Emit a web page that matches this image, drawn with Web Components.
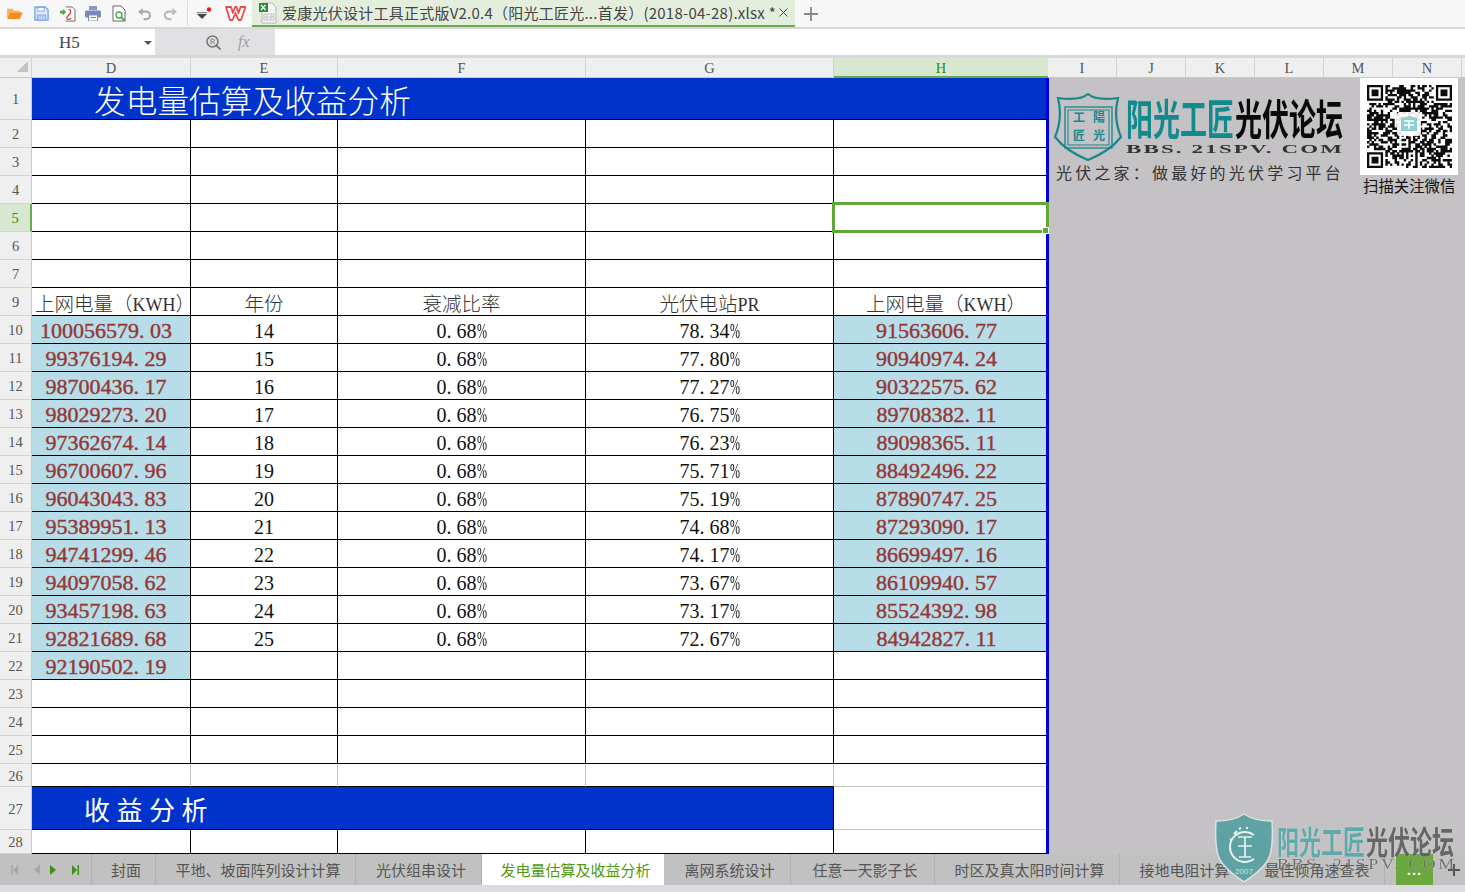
<!DOCTYPE html>
<html lang="zh">
<head>
<meta charset="utf-8">
<title>发电量估算及收益分析</title>
<style>
  html,body{margin:0;padding:0;width:1465px;height:892px;overflow:hidden;background:#c4c2c5}
  body{position:relative;display:flex;flex-direction:column;font-family:"Noto Sans CJK SC","Liberation Sans",sans-serif}
  .work{display:flex;height:776px;flex:none;overflow:hidden}
</style>
</head>
<body>
<wps-toolbar></wps-toolbar>
<formula-bar cell="H5"></formula-bar>
<column-header></column-header>
<div class="work">
  <sheet-grid></sheet-grid>
  <brand-panel></brand-panel>
</div>
<sheet-tabs>
  <sheet-tab w="64">封面</sheet-tab>
  <sheet-tab w="200">平地、坡面阵列设计计算</sheet-tab>
  <sheet-tab w="126">光伏组串设计</sheet-tab>
  <sheet-tab w="182" active>发电量估算及收益分析</sheet-tab>
  <sheet-tab w="127">离网系统设计</sheet-tab>
  <sheet-tab w="144">任意一天影子长</sheet-tab>
  <sheet-tab w="185">时区及真太阳时间计算</sheet-tab>
  <sheet-tab w="125">接地电阻计算</sheet-tab>
  <sheet-tab w="140">最佳倾角速查表</sheet-tab>
</sheet-tabs>
<status-strip></status-strip>
<site-watermark></site-watermark>

<script>
const CJK='"Noto Sans CJK SC","Liberation Sans",sans-serif';

class Base extends HTMLElement{
  constructor(){super();this.attachShadow({mode:'open'}).innerHTML=this.render();}
  render(){return ''}
}

customElements.define('wps-toolbar',class extends Base{render(){return `
<style>
:host{display:block;height:29px;flex:none;box-sizing:border-box;border-bottom:2px solid #d8d8dc;background:#f7f7f7}
.row{display:grid;height:27px;grid-template-columns:6px 17px 11px 15px 10px 17px 9px 16px 11px 15px 11px 13px 12px 14px 10px 1px 9px 16px 7px 32px 543px 9px 14px;align-items:center}
.row svg{display:block;grid-row:1}
.sep{width:1px;height:25px;background:#dcdcdc;grid-column:16;grid-row:1}
.w{grid-column:20;grid-row:1;height:27px;background:#fafafa;display:flex;align-items:center;justify-content:flex-start;margin-left:-1px;padding-left:6px}
.tab{grid-column:21;grid-row:1;height:27px;box-sizing:border-box;border-bottom:2px solid #6fa84f;background:#e4eedd;display:flex;align-items:center;font:15px ${CJK};color:#444;white-space:nowrap;overflow:hidden}
.tab svg{margin:0 5px 0 7px;flex:none}
.tab span{flex:1;letter-spacing:.24px}
.tab i{font-style:normal;flex:none;margin-right:7px}
</style>
<div class="row">
 <svg style="grid-column:2" width="17" height="13" viewBox="0 0 18 14"><path d="M1 12V2h6l1.500 2H15v2H5z" fill="#f7b254"/><path d="M1 13l3.500-7H18l-3.500 7z" fill="#f58a1f"/></svg>
 <svg style="grid-column:4" width="15" height="15" viewBox="0 0 16 16"><path d="M1 1h11l3 3v11H1z" fill="#e3ecfb" stroke="#7ba6ef" stroke-width="1.500"/><rect x="4" y="1.500" width="7" height="4" fill="#fff" stroke="#7ba6ef"/><rect x="3.500" y="9.500" width="9" height="5.500" fill="#b7cff6" stroke="#7ba6ef"/></svg>
 <svg style="grid-column:6" width="17" height="16" viewBox="0 0 18 17"><path d="M7 1h7l3 3v12H7" fill="#fff" stroke="#666"/><path d="M1 5h3V3l3.500 3.500L4 10V8H1z" fill="#4aa84a"/><path d="M10 4c3-1 3 3 1 5s-4 4-2 5 3-1 4-1" fill="none" stroke="#d33" stroke-width="1.300"/></svg>
 <svg style="grid-column:8" width="16" height="15" viewBox="0 0 16 15"><rect x="4" y="0" width="8" height="4" fill="#8b98bf"/><rect x="0" y="4.500" width="16" height="7" rx="1.500" fill="#7b8ab5"/><rect x="3.500" y="9" width="9" height="6" fill="#fff" stroke="#7b8ab5"/><rect x="5" y="11" width="6" height="1" fill="#7b8ab5"/></svg>
 <svg style="grid-column:10" width="15" height="17" viewBox="0 0 15 17"><path d="M1 1h8l4 4v11H1z" fill="#fff" stroke="#666"/><circle cx="7" cy="10" r="3" fill="none" stroke="#4faa4f" stroke-width="1.400"/><path d="M9 12l4 4" stroke="#4faa4f" stroke-width="2"/></svg>
 <svg style="grid-column:12" width="13" height="14" viewBox="0 0 14 15"><path d="M4 5h5a4 4 0 0 1 0 8H6" fill="none" stroke="#a9a9a9" stroke-width="2.400"/><path d="M0 5l5-4v8z" fill="#a9a9a9"/></svg>
 <svg style="grid-column:14" width="14" height="14" viewBox="0 0 15 15"><path d="M10 5H6a4 4 0 0 0 0 8h3" fill="none" stroke="#b9b9b9" stroke-width="2.400"/><path d="M15 5L10 1v8z" fill="#b9b9b9"/></svg>
 <span class="sep"></span>
 <svg style="grid-column:18" width="16" height="14" viewBox="0 0 16 14"><circle cx="12" cy="2.500" r="2.200" fill="#f01818"/><rect x="0" y="5" width="10" height="1.200" fill="#888"/><path d="M0 7h10l-5 5z" fill="#444"/></svg>
 <div class="w"><svg width="21" height="15" viewBox="0 0 21 15"><path d="M1 1h5l2 6 2-6h1.500l2 6 2-6h5L16 14h-2.500L10.500 7 7.500 14H5z" fill="#fff" stroke="#ef4b4b" stroke-width="1.800" stroke-linejoin="round"/></svg></div>
 <div class="tab"><svg width="18" height="22" viewBox="0 0 18 22"><path d="M3 1h10l4 4v16H3z" fill="#f4f4f4" stroke="#b8b8b8"/><path d="M5 12h10v6H5zM5 15h10M8 12v6M12 12v6" fill="none" stroke="#c2c2c2"/><rect x="0" y="1" width="9" height="9" fill="#2e8b3a"/><path d="M2 3l4.500 5M6.500 3L2 8" stroke="#fff" stroke-width="1.200"/></svg><span>爱康光伏设计工具正式版V2.0.4（阳光工匠光...首发）(2018-04-28).xlsx *</span><i><svg style="margin:0" width="9" height="9" viewBox="0 0 9 9"><path d="M.5.5l8 8M8.500.5l-8 8" stroke="#444"/></svg></i></div>
 <svg style="grid-column:23" width="14" height="14" viewBox="0 0 14 14"><path d="M7 0v14M0 7h14" stroke="#888" stroke-width="1.800"/></svg>
</div>`}});

customElements.define('formula-bar',class extends Base{render(){return `
<style>
:host{display:flex;height:29px;flex:none;box-sizing:border-box;border-bottom:3px solid #d8d8dc;background:#e1e1e3;align-items:stretch}
.name{width:155px;background:#fff;display:flex;align-items:center;box-sizing:border-box;padding:2px 0 0 59px;font:17px "Liberation Serif",serif;color:#444}
.name b{margin-left:auto;margin-right:3px;width:0;height:0;border:4px solid transparent;border-top-color:#555;border-bottom:0}
.tools{width:120px;display:flex;align-items:center;padding-left:51px;box-sizing:border-box;gap:17px}
.fx{font:italic 16px "Liberation Serif",serif;color:#a0a0a0}
.input{flex:1;background:#fff}
</style>
<div class="name">H5<b></b></div>
<div class="tools">
 <svg width="15" height="15" viewBox="0 0 15 15"><circle cx="6.500" cy="6.500" r="5.500" fill="none" stroke="#777" stroke-width="1.500"/><path d="M10.500 10.500L14.500 14.500" stroke="#777" stroke-width="1.800"/><path d="M5 9.500V4h2a1.500 1.500 0 0 1 0 3H5m2 0l2 2.500" fill="none" stroke="#888"/></svg>
 <span class="fx">fx</span>
</div>
<div class="input"></div>`}});

customElements.define('column-header',class extends Base{render(){
 const cols=[['',32],['D',159],['E',147],['F',248],['G',248],['H',214],['I',69],['J',69],['K',69],['L',69],['M',69],['N',69],['',4]];
 return `
<style>
:host{display:flex;height:20px;flex:none;background:#efefef}
div{box-sizing:border-box;height:20px;border-right:1px solid #d2d2d2;border-bottom:1px solid #c8c8c8;font:14.500px/21px "Liberation Serif",serif;color:#555;text-align:center;flex:none}
.h{background:#d8e7d0;color:#2f8a06;border-bottom:2px solid #6aa84f;border-right:0}
svg{display:block;margin:3px 0 0 17px}
</style>
${cols.map(([c,w])=>`<div class="${c=='H'?'h':''}" style="width:${w}px">${c}${!c&&w==32?'<svg width="11" height="11" viewBox="0 0 11 11"><path d="M11 0v11H0z" fill="#c4c4c4"/></svg>':''}</div>`).join('')}`}});

function num(s){return s.replace('.', '<span class="dot">.</span>').replace('%','<span class="pct">%</span>')}

customElements.define('sheet-grid',class extends Base{render(){
 const d=[
 ['100056579.03',14,'78.34%','91563606.77'],['99376194.29',15,'77.80%','90940974.24'],['98700436.17',16,'77.27%','90322575.62'],
 ['98029273.20',17,'76.75%','89708382.11'],['97362674.14',18,'76.23%','89098365.11'],['96700607.96',19,'75.71%','88492496.22'],
 ['96043043.83',20,'75.19%','87890747.25'],['95389951.13',21,'74.68%','87293090.17'],['94741299.46',22,'74.17%','86699497.16'],
 ['94097058.62',23,'73.67%','86109940.57'],['93457198.63',24,'73.17%','85524392.98'],['92821689.68',25,'72.67%','84942827.11']];
 const empty='<i class="c"></i>'.repeat(5);
 const lab=(n,x='')=>`<b class="r ${x}">${n}</b>`;
 const kwh='<span>上网电量（<span class="m">KWH</span>）</span>';
 let h='';
 h+=lab(1)+`<i class="c title" style="grid-column:span 5">发电量估算及收益分析</i>`;
 [2,3,4,5,6,7].forEach(n=>{h+=lab(n,n==5?'sel':'')+empty;});
 h+=lab(9)+`<i class="c hd hd1">${kwh}</i><i class="c hd">年份</i><i class="c hd">衰减比率</i><i class="c hd"><span>光伏电站<span class="m">PR</span></span></i><i class="c hd hd2">${kwh}</i>`;
 d.forEach((r,i)=>{h+=lab(10+i)+`<i class="c v dl">${num(r[0])}</i><i class="c n">${r[1]}</i><i class="c n">${num('0.68%')}</i><i class="c n">${num(r[2])}</i><i class="c v hl">${num(r[3])}</i>`;});
 h+=lab(22)+`<i class="c v dl">${num('92190502.19')}</i>`+'<i class="c"></i>'.repeat(4);
 [23,24,25].forEach(n=>h+=lab(n)+empty);
 h+=lab(26)+'<i class="c gv"></i>'.repeat(4)+'<i class="c gb gv"></i>';
 h+=lab(27)+`<i class="c title t2" style="grid-column:span 4">收益分析</i><i class="c gb"></i>`;
 h+=lab(28)+'<i class="c"></i>'.repeat(5);
 return `
<style>
:host{display:block;width:1049px;flex:none;background:#fff;position:relative;overflow:hidden}
.g{display:grid;grid-template-columns:32px 159px 147px 248px 248px 215px;
 grid-template-rows:42px repeat(6,28px) 28px repeat(13,28px) repeat(3,28px) 23px 43px 24px;
 position:relative}
.r{font:400 14.500px/1 "Liberation Serif",serif;color:#555;background:#efefef;border-bottom:1px solid #d2d2d2;border-right:1px solid #c8c8c8;box-sizing:border-box;display:flex;align-items:center;justify-content:center;padding-top:2px}
.r.sel{background:#d8e7d0;color:#2f8a06;border-right:2px solid #6aa84f}
.c{font-style:normal;box-sizing:border-box;border-right:1px solid #000;border-bottom:1px solid #000;background:#fff;display:flex;align-items:center;justify-content:center;white-space:pre;color:#111;min-width:0}
.title{background:#0033cc;color:#fff;justify-content:flex-start;padding-left:62px;font:300 31.700px/40px ${CJK};border-right:0}
.t2{padding:2px 0 0 52px;font:400 26px/36px ${CJK};letter-spacing:6.500px;border-right:1px solid #000}
.hd{font:300 19.500px/1 ${CJK};color:#333;padding-top:3px}
.m{font:18px/1 "Liberation Serif",serif;letter-spacing:0}
.hd1{padding-left:8px}
.hd2{padding-left:10px}
.n{font:20px/1 "Liberation Serif",serif;padding-top:2px}
.v{background:#b7dde8;color:#953735;font:22px/1 "Liberation Serif",serif;-webkit-text-stroke:.4px #953735;padding-top:2px}
.dl{padding-right:10px}
.hl{padding-right:9px}
.gb{border-bottom-color:#c4c4c4}
.gv{border-right-color:#c4c4c4}
.dot{letter-spacing:.25em}
.pct{display:inline-block;width:10px;transform:scaleX(.6);transform-origin:0 50%}
.edge{position:absolute;grid-column:6/7;grid-row:1/-1;right:0;top:0;bottom:0;width:3px;background:#0000dc;z-index:2}
.box{position:absolute;grid-column:6/7;grid-row:5/6;box-sizing:border-box;left:-2px;right:0;top:-2px;bottom:-1px;border:3px solid #62a838;z-index:3;pointer-events:none}
.box:after{content:"";position:absolute;right:-3px;bottom:-4px;width:5px;height:5px;background:#62a838;border:1px solid #fff}
</style>
<div class="g">${h}<span class="edge"></span><span class="box"></span></div>`}});

customElements.define('brand-panel',class extends Base{render(){
 let seed=20180428;const rnd=()=>(seed=(seed*1664525+1013904223)>>>0)/4294967296;
 const N=37;let cells='';
 const inF=(x,y)=>(x<8&&y<8)||(x>=N-8&&y<8)||(x<8&&y>=N-8);
 for(let y=0;y<N;y++)for(let x=0;x<N;x++){ if(inF(x,y))continue; if(x>14&&x<22&&y>14&&y<22)continue; if(rnd()<.56)cells+=`M${x} ${y}h1.050v1.050h-1.050z`; }
 const f=(x,y)=>`<path d="M${x} ${y}h7v7h-7zM${x+1} ${y+1}v5h5v-5z" fill-rule="evenodd"/><rect x="${x+2}" y="${y+2}" width="3" height="3"/>`;
 return `
<style>
:host{display:flex;width:416px;flex:none;background:#c4c2c5;align-items:flex-start;font-family:${CJK};overflow:hidden}
.logo{width:306px;margin-left:5px;padding-top:15px;flex:none;box-sizing:border-box}
.top{display:flex;align-items:flex-start;height:68px}
.names{margin-left:4px;width:222px;height:62px;flex:none;display:flex;flex-direction:column}
.cn{height:43px;margin-top:3px;white-space:nowrap;font-weight:700;font-size:27px;line-height:43px;transform:scaleY(1.55);transform-origin:0 50%;letter-spacing:0}
.cn span{color:#118a8e}.cn em{font-style:normal;color:#0a0a0a;margin-left:1px}
.url{font:700 13px/13px "Liberation Serif",serif;color:#333;white-space:nowrap;transform:scaleX(1.770);transform-origin:0 0;letter-spacing:1.200px;margin-top:3px}
.tag{font-size:16px;line-height:20px;letter-spacing:3.200px;color:#333;margin:1px 0 0 2px;white-space:nowrap}
.qr{width:98px;flex:none}
.pic{width:98px;height:97px;background:#fff;display:flex;align-items:center;justify-content:center;position:relative}
.pic svg.q{filter:blur(.35px)}
.mid{position:absolute;left:37px;top:34px}
.cap{font-size:15.400px;line-height:20px;color:#111;margin:0 0 0 3px;white-space:nowrap}
</style>
<div class="logo">
 <div class="top">
  <svg width="68" height="68" viewBox="0 0 68 68" style="flex:none">
   <path d="M34 1Q26 8 4 5Q9 25 1 44Q12 58 34 67Q56 58 67 44Q59 25 64 5Q42 8 34 1Z" fill="none" stroke="#16888d" stroke-width="2.200"/>
   <rect x="11" y="14" width="47" height="41" fill="none" stroke="#16888d" stroke-width="1.300"/>
   <rect x="14" y="17" width="41" height="35" fill="none" stroke="#16888d" stroke-width="1"/>
   <g fill="#16888d" font-family="Noto Sans CJK SC,sans-serif" font-size="12" font-weight="700" text-anchor="middle">
    <text x="25" y="29">工</text><text x="45" y="29">陽</text><text x="25" y="47">匠</text><text x="45" y="47">光</text>
   </g>
  </svg>
  <div class="names">
   <div class="cn"><span>阳光工匠</span><em>光伏论坛</em></div>
   <div class="url">BBS. 21SPV. COM</div>
  </div>
 </div>
 <div class="tag">光伏之家：做最好的光伏学习平台</div>
</div>
<div class="qr">
 <div class="pic">
  <svg class="q" width="85" height="83" viewBox="0 0 37 37" preserveAspectRatio="none" fill="#0c0c0c"><path d="${cells}"/>${f(0,0)}${f(30,0)}${f(0,30)}</svg>
  <svg class="mid" width="24" height="24" viewBox="0 0 24 24"><rect width="24" height="24" rx="3" fill="#fff" opacity=".9"/><path d="M12 4l8 2v13H4V6z" fill="#8fcfcf"/><path d="M7 9h10M7 13h10M12 9v8" stroke="#fff" stroke-width="1.500"/></svg>
 </div>
 <div class="cap">扫描关注微信</div>
</div>`}});

customElements.define('sheet-tabs',class extends Base{render(){return `
<style>
:host{display:flex;height:31px;flex:none;background:#c1c1c1;position:relative;align-items:stretch}
.nav{width:92px;box-sizing:border-box;border-right:1px solid #b0b0b0;display:grid;grid-template-columns:11px 7px 16px 6px 10px 6px 16px 7px;align-items:center;padding-top:1px}
.nav svg{display:block;grid-row:1}
.more{width:37px;background:#6aa83e;margin-left:11px;color:#fff;font:700 15px/31px "Liberation Sans",sans-serif;text-align:center;letter-spacing:1px;flex:none}
.plus{margin-left:15px;align-self:center;flex:none}
</style>
<div class="nav">
 <svg style="grid-column:2" width="7" height="10" viewBox="0 0 7 10"><path d="M0 0h1.500v10H0zM7 0v10L2 5z" fill="#a6a6a6"/></svg>
 <svg style="grid-column:4" width="6" height="10" viewBox="0 0 6 10"><path d="M6 0v10L0 5z" fill="#a6a6a6"/></svg>
 <svg style="grid-column:6" width="6" height="10" viewBox="0 0 6 10"><path d="M0 0v10l6-5z" fill="#3f8f10"/></svg>
 <svg style="grid-column:8" width="7" height="10" viewBox="0 0 7 10"><path d="M0 0v10l5-5zM5.500 0H7v10H5.500z" fill="#3f8f10"/></svg>
</div>
<slot></slot>
<div class="more">...</div>
<svg class="plus" width="12" height="12" viewBox="0 0 12 12"><path d="M6 0v12M0 6h12" stroke="#555" stroke-width="2"/></svg>`}});

customElements.define('sheet-tab',class extends HTMLElement{
 constructor(){super();this.attachShadow({mode:'open'}).innerHTML=`
<style>
:host{display:flex;box-sizing:border-box;align-items:center;justify-content:center;padding-left:5px;border-right:1px solid #b0b0b0;font:15px ${CJK};color:#555;white-space:nowrap;flex:none}
:host([active]){background:#fff;color:#4f9a10;border-right:0}
</style><slot></slot>`;}
 connectedCallback(){this.style.width=this.getAttribute('w')+'px';}
});

customElements.define('status-strip',class extends Base{render(){return `<style>:host{display:block;height:7px;flex:none;background:#dcdce0}</style>`}});

customElements.define('site-watermark',class extends Base{render(){return `
<style>
:host{position:absolute;left:1214px;top:813px;width:245px;height:70px;display:flex;pointer-events:none;font-family:${CJK}}
.t{margin-left:3px;width:180px;flex:none}
.cn{font-weight:700;font-size:22px;line-height:34px;margin-top:10px;white-space:nowrap;transform:scaleY(1.45);transform-origin:0 50%;text-shadow:0 0 1px #ddd}
.cn span{color:#5fa9aa}.cn em{font-style:normal;color:#5c5c5c;opacity:.9;margin-left:1px}
.url{font:15.500px/14px "Liberation Serif",serif;color:#666;opacity:.9;letter-spacing:2.200px;white-space:nowrap;margin-top:0;text-shadow:0 0 1px #eee;transform:scaleX(1.160);transform-origin:0 0}
</style>
<svg width="60" height="70" viewBox="0 0 60 70" style="flex:none">
 <path d="M30 1Q20 8 2 8Q0 40 8 50Q16 60 30 69Q44 60 52 50Q60 40 58 8Q40 8 30 1Z" fill="#5fa2a3" stroke="#dfe2e2" stroke-width="1.500"/>
 <path d="M40 22a15 15 0 1 0 0 24M20 21l3-3M16 27l2-1M25 16l2-1M32 15h2" fill="none" stroke="#e9f1f1" stroke-width="2"/>
 <path d="M24 24h14M31 24v20M24 33h14M25 44h12" fill="none" stroke="#e9f1f1" stroke-width="1.700"/>
 <text x="30" y="61" font-size="8" fill="#cfe2e2" text-anchor="middle" font-family="Liberation Sans,sans-serif">2007</text>
</svg>
<div class="t">
 <div class="cn"><span>阳光工匠</span><em>光伏论坛</em></div>
 <div class="url">BBS. 21SPV. COM</div>
</div>`}});
</script>
</body>
</html>
